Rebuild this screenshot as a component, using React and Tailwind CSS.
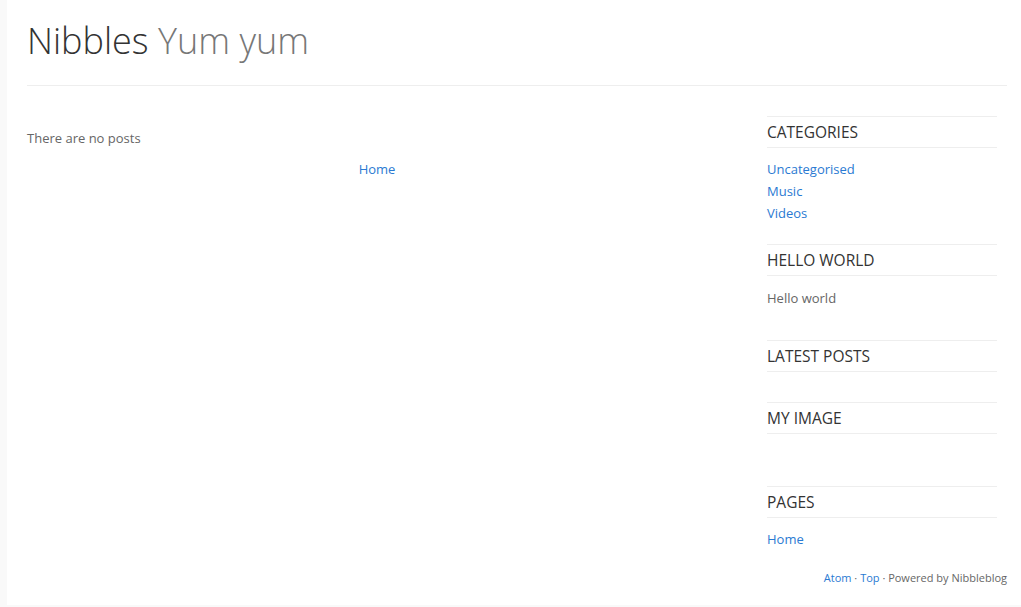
import React from "react";

const sections = [
  { title: "CATEGORIES", links: ["Uncategorised", "Music", "Videos"] },
  { title: "HELLO WORLD", text: "Hello world" },
  { title: "LATEST POSTS" },
  { title: "MY IMAGE", image: true },
  { title: "PAGES", links: ["Home"] },
];

function Widget({ section }) {
  return (
    <div className="pb-[20px]">
      <h3 className="border-y border-[#eeeeee] text-[15.5px] leading-[30px] font-normal text-[#333333]">
        {section.title}
      </h3>
      <div className="pt-[10px]">
        {section.links && (
          <ul>
            {section.links.map((l) => (
              <li key={l} className="text-[13px] leading-[22px]">
                <a href="#" className="text-[#2a7ad2]">{l}</a>
              </li>
            ))}
          </ul>
        )}
        {section.text && (
          <p className="text-[13px] leading-[22px] text-[#666666] pt-[1px] pb-[11px]">{section.text}</p>
        )}
        {section.image && <div className="h-[22px]" />}
      </div>
    </div>
  );
}

export default function App() {
  return (
    <div className="min-h-screen bg-[#f9f9f9] pl-[7px] pb-[2px]" style={{ fontFamily: '"Open Sans", sans-serif' }}>
      <div className="bg-white pl-[20px]">
        <div className="w-[980px]">
          <header className="pt-[17px]">
            <h1 className="text-[36px] leading-[48px] font-light text-[#333333]">
              Nibbles <span className="text-[#777777]">Yum yum</span>
            </h1>
            <hr className="mt-[20px] border-0 border-t border-[#eeeeee]" />
          </header>

          <div className="flex gap-[40px] mt-[30px]">
            <main className="w-[700px] pt-[11px]">
              <p className="text-[13px] leading-[22px] text-[#666666] mb-[9px]">There are no posts</p>
              <div className="text-center text-[13px] leading-[22px]">
                <a href="#" className="text-[#2a7ad2]">Home</a>
              </div>
            </main>
            <aside className="w-[230px]">
              {sections.map((s) => (
                <Widget key={s.title} section={s} />
              ))}
            </aside>
          </div>

          <footer className="text-right text-[11px] leading-[16px] text-[#666666] pb-[19px]">
            <a href="#" className="text-[#2a7ad2]">Atom</a> · <a href="#" className="text-[#2a7ad2]">Top</a> · Powered by Nibbleblog
          </footer>
        </div>
      </div>
    </div>
  );
}
